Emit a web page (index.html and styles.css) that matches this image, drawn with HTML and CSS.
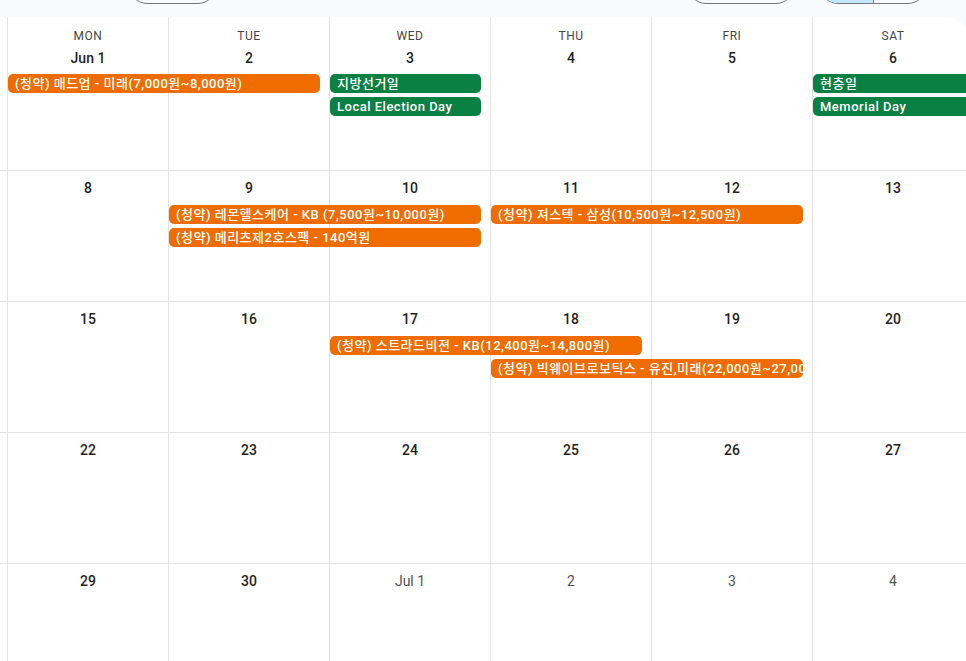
FILE: index.html
```html
<!DOCTYPE html>
<html lang="ko">
<head>
<meta charset="utf-8">
<title>Calendar - June</title>
<link rel="stylesheet" href="styles.css">
</head>
<body>
<div class="toolbar">
  <div class="btn btn-today"></div>
  <div class="btn btn-view"></div>
  <div class="seg"><span class="seg-a"></span><span class="seg-b"></span></div>
</div>
<div class="surface">
  <div class="week first">
    <div class="cell"></div>
    <div class="cell"><div class="dow">MON</div><div class="date">Jun 1</div></div>
    <div class="cell"><div class="dow">TUE</div><div class="date">2</div></div>
    <div class="cell"><div class="dow">WED</div><div class="date">3</div></div>
    <div class="cell"><div class="dow">THU</div><div class="date">4</div></div>
    <div class="cell"><div class="dow">FRI</div><div class="date">5</div></div>
    <div class="cell"><div class="dow">SAT</div><div class="date">6</div></div>
    <div class="ev orange r1 c2-3">(청약) 매드업 - 미래(7,000원~8,000원)</div>
    <div class="ev green r1 c4">지방선거일</div>
    <div class="ev green r2 c4">Local Election Day</div>
    <div class="ev green r1 c7">현충일</div>
    <div class="ev green r2 c7">Memorial Day</div>
  </div>
  <div class="week">
    <div class="cell"></div>
    <div class="cell"><div class="date">8</div></div>
    <div class="cell"><div class="date">9</div></div>
    <div class="cell"><div class="date">10</div></div>
    <div class="cell"><div class="date">11</div></div>
    <div class="cell"><div class="date">12</div></div>
    <div class="cell"><div class="date">13</div></div>
    <div class="ev orange r1 c3-4">(청약) 레몬헬스케어 - KB (7,500원~10,000원)</div>
    <div class="ev orange r1 c5-6">(청약) 져스텍 - 삼성(10,500원~12,500원)</div>
    <div class="ev orange r2 c3-4">(청약) 메리츠제2호스팩 - 140억원</div>
  </div>
  <div class="week">
    <div class="cell"></div>
    <div class="cell"><div class="date">15</div></div>
    <div class="cell"><div class="date">16</div></div>
    <div class="cell"><div class="date">17</div></div>
    <div class="cell"><div class="date">18</div></div>
    <div class="cell"><div class="date">19</div></div>
    <div class="cell"><div class="date">20</div></div>
    <div class="ev orange r1 c4-5">(청약) 스트라드비젼 - KB(12,400원~14,800원)</div>
    <div class="ev orange r2 c5-6">(청약) 빅웨이브로보틱스 - 유진,미래(22,000원~27,000원)</div>
  </div>
  <div class="week">
    <div class="cell"></div>
    <div class="cell"><div class="date">22</div></div>
    <div class="cell"><div class="date">23</div></div>
    <div class="cell"><div class="date">24</div></div>
    <div class="cell"><div class="date">25</div></div>
    <div class="cell"><div class="date">26</div></div>
    <div class="cell"><div class="date">27</div></div>
  </div>
  <div class="week last">
    <div class="cell"></div>
    <div class="cell"><div class="date">29</div></div>
    <div class="cell"><div class="date">30</div></div>
    <div class="cell"><div class="date other">Jul 1</div></div>
    <div class="cell"><div class="date other">2</div></div>
    <div class="cell"><div class="date other">3</div></div>
    <div class="cell"><div class="date other">4</div></div>
  </div>
</div>
</body>
</html>
```
FILE: styles.css
```css
html, body {
  margin: 0;
  padding: 0;
}
body {
  background: #f8fafd;
  overflow: hidden;
  height: 661px;
  font-family: Roboto, "Noto Sans CJK KR", sans-serif;
  color: #1f1f1f;
}

/* toolbar (only the bottoms of the buttons are visible) */
.toolbar {
  height: 17px;
  display: flex;
  align-items: flex-end;
  padding-left: 129px;
}
.btn, .seg {
  height: 36px;
  box-sizing: border-box;
  border: 1px solid #747775;
  border-radius: 18px;
  margin-bottom: 13px;
  flex: none;
}
.btn-today { width: 87px; }
.btn-view { width: 106px; margin-left: 472px; }
.seg {
  width: 106px;
  margin-left: 26px;
  display: flex;
  overflow: hidden;
}
.seg-a {
  width: 52px;
  background: #c2e7ff;
  border-right: 1px solid #747775;
}
.seg-b { flex: 1; }

/* month surface */
.surface {
  background: #fff;
  width: 1127px;
  margin-left: -154px;
  border-top-right-radius: 28px;
  overflow: hidden;
}
.week {
  display: grid;
  grid-template-columns: repeat(7, 161px);
  grid-template-rows: 34px 23px 23px 1fr;
  height: 131px;
  box-sizing: border-box;
  border-bottom: 1px solid #e3e3e3;
}
.week.first {
  grid-template-rows: 57px 23px 23px 1fr;
  height: 154px;
}
.week.last {
  height: 98px;
  border-bottom: 0;
}
.cell {
  grid-row: 1 / -1;
  border-left: 1px solid #e3e3e3;
  text-align: center;
}
.cell:nth-child(1) { grid-column: 1; }
.cell:nth-child(2) { grid-column: 2; }
.cell:nth-child(3) { grid-column: 3; }
.cell:nth-child(4) { grid-column: 4; }
.cell:nth-child(5) { grid-column: 5; }
.cell:nth-child(6) { grid-column: 6; }
.cell:nth-child(7) { grid-column: 7; }

.dow {
  margin-top: 11px;
  font-size: 12px;
  line-height: 16px;
  font-weight: 400;
  letter-spacing: 0.5px;
  color: #444746;
}
.date {
  margin-top: 5px;
  font-size: 14px;
  line-height: 24px;
  font-weight: 500;
  color: #1f1f1f;
}
.first .date { margin-top: 2px; }
.date.other { color: #4f5356; font-weight: 400; }

/* event chips */
.ev {
  align-self: start;
  height: 19px;
  margin: 0 9px 0 1px;
  padding-left: 7px;
  border-radius: 5px;
  color: #fff;
  font-size: 13px;
  line-height: 19px;
  font-weight: 500;
  letter-spacing: 0.5px;
  white-space: nowrap;
  overflow: hidden;
}
.orange { background: #ef6c00; }
.green { background: #0b8043; }
.r1 { grid-row: 2; }
.r2 { grid-row: 3; }
.c2-3 { grid-column: 2 / 4; }
.c3-4 { grid-column: 3 / 5; }
.c4-5 { grid-column: 4 / 6; }
.c5-6 { grid-column: 5 / 7; }
.c4 { grid-column: 4; }
.c7 { grid-column: 7; margin-right: 0; }
```
